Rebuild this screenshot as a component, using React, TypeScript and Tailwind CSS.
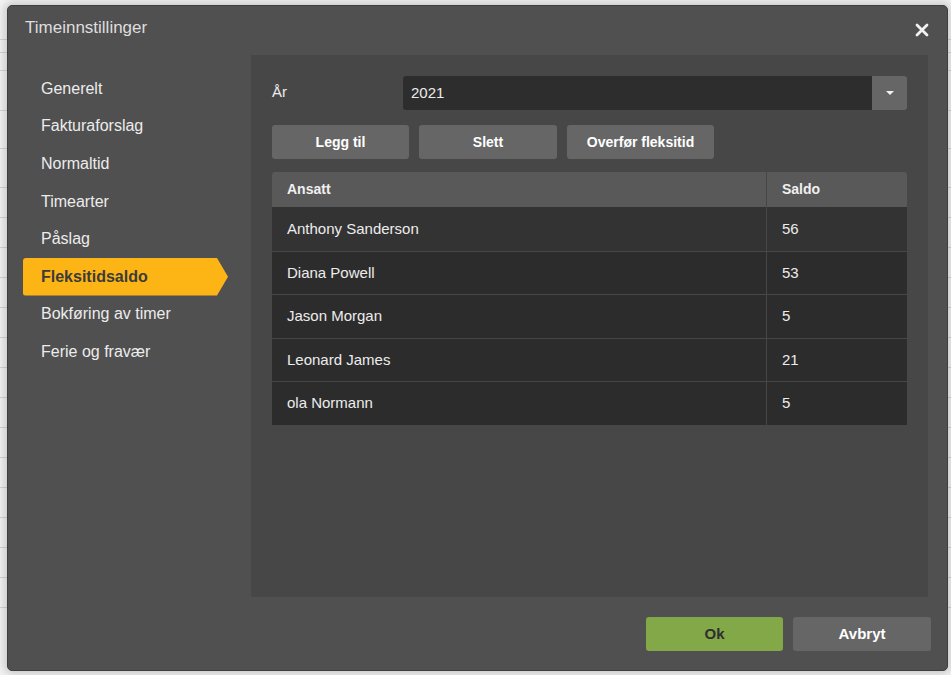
import { useState } from 'react'

const menu = [
  'Generelt',
  'Fakturaforslag',
  'Normaltid',
  'Timearter',
  'Påslag',
  'Fleksitidsaldo',
  'Bokføring av timer',
  'Ferie og fravær',
]

const rows = [
  { name: 'Anthony Sanderson', saldo: 56 },
  { name: 'Diana Powell', saldo: 53 },
  { name: 'Jason Morgan', saldo: 5 },
  { name: 'Leonard James', saldo: 21 },
  { name: 'ola Normann', saldo: 5 },
]

// background page lines peeking out from behind the modal
const bgRows = [40, 13, 18, 40, 38, 39, 30, 30, 30, 30, 30, 30, 30, 30, 30, 30, 30, 30, 30, 30]

export default function App() {
  const [active, setActive] = useState('Fleksitidsaldo')
  const [hover, setHover] = useState(0)

  return (
    <div className="relative w-[951px] h-[675px] overflow-hidden bg-[#f4f4f4] font-['Liberation_Sans',Arial,sans-serif]">
      {/* page behind */}
      <div className="flex flex-col">
        {bgRows.map((h, i) => (
          <div key={i} style={{ height: h }} className="border-b border-[#d6d6d6]" />
        ))}
      </div>

      {/* Modal */}
      <div className="absolute left-[7px] top-[5px] w-[941px] h-[666px] rounded-[5px] bg-[#505050] border border-[#3e3e3e] shadow-[0_0_10px_3px_rgba(0,0,0,0.18)] flex flex-col">
        {/* Header */}
        <div className="h-[49px] flex items-center justify-between pl-[17px] pr-[17px]">
          <h1 className="text-[17px] text-[#dedede] pb-[6px]">Timeinnstillinger</h1>
          <button className="w-4 h-4 flex items-center justify-center mb-[2px]">
            <svg viewBox="0 0 14 14" className="w-[14px] h-[14px]">
              <path d="M2 2 L12 12 M12 2 L2 12" stroke="#f2f2f2" strokeWidth="2.8" strokeLinecap="round" />
            </svg>
          </button>
        </div>

        {/* Body */}
        <div className="flex h-[542px]">
          {/* Sidebar */}
          <nav className="w-[243px] shrink-0 pl-[15px] pt-[15px] flex flex-col">
            {menu.map(item => {
              const selected = item === active
              return (
                <button
                  key={item}
                  onClick={() => setActive(item)}
                  className={
                    selected
                      ? 'h-[37.6px] w-[205px] text-left pl-[18px] text-[16px] font-bold text-[#3b3b3b] bg-[#fdb515] rounded-l-[3px] [clip-path:polygon(0_0,calc(100%-11px)_0,100%_50%,calc(100%-11px)_100%,0_100%)]'
                      : 'h-[37.6px] w-[205px] text-left pl-[18px] text-[16px] text-[#ececec]'
                  }
                >
                  {item}
                </button>
              )
            })}
          </nav>

          {/* Content panel */}
          <div className="w-[677px] bg-[#474747] p-[21px]">
            {/* Year */}
            <div className="flex items-center h-[34px]">
              <label className="w-[131px] text-[15px] text-[#ececec] pb-[2px]">År</label>
              <div className="flex flex-1 h-full rounded-[3px] overflow-hidden">
                <div className="flex-1 bg-[#2d2d2d] flex items-center pl-2 text-[15px] text-[#ececec]">2021</div>
                <div className="w-[35px] bg-[#666666] flex items-center justify-center">
                  <svg viewBox="0 0 8 4" className="w-[8px] h-[4px]">
                    <path d="M0 0 H8 L4 4 Z" fill="#f2f2f2" />
                  </svg>
                </div>
              </div>
            </div>

            {/* Actions */}
            <div className="flex gap-[10px] mt-[15px]">
              <button className="w-[137px] h-[34px] rounded-[3px] bg-[#666666] text-white text-[14px] font-bold">Legg til</button>
              <button className="w-[138px] h-[34px] rounded-[3px] bg-[#666666] text-white text-[14px] font-bold">Slett</button>
              <button className="w-[147px] h-[34px] rounded-[3px] bg-[#666666] text-white text-[14px] font-bold">Overfør fleksitid</button>
            </div>

            {/* Table */}
            <div className="mt-[13px] rounded-t-[3px] overflow-hidden">
              <div className="flex h-[35px] bg-[#595959] text-[14px] font-bold text-[#f0f0f0]">
                <div className="w-[495px] flex items-center pl-[15px] border-r border-[#474747]">Ansatt</div>
                <div className="flex-1 flex items-center pl-[15px]">Saldo</div>
              </div>
              {rows.map((r, i) => (
                <div
                  key={r.name}
                  onMouseEnter={() => setHover(i)}
                  className={
                    (hover === i ? 'bg-[#333333] ' : 'bg-[#2c2c2c] ') +
                    'flex h-[43.6px] text-[15px] text-[#ececec] ' +
                    (i > 0 ? 'border-t border-[#474747]' : '')
                  }
                >
                  <div className="w-[495px] flex items-center pl-[15px] border-r border-[#474747]">{r.name}</div>
                  <div className="flex-1 flex items-center pl-[15px]">{r.saldo}</div>
                </div>
              ))}
            </div>
          </div>
        </div>

        {/* Footer */}
        <div className="flex justify-end gap-[10px] pr-[16px] pt-[20px]">
          <button className="w-[137px] h-[34px] rounded-[3px] bg-[#83a847] text-[#2f2f2f] text-[15px] font-bold">Ok</button>
          <button className="w-[138px] h-[34px] rounded-[3px] bg-[#666666] text-white text-[15px] font-bold">Avbryt</button>
        </div>
      </div>
    </div>
  )
}
